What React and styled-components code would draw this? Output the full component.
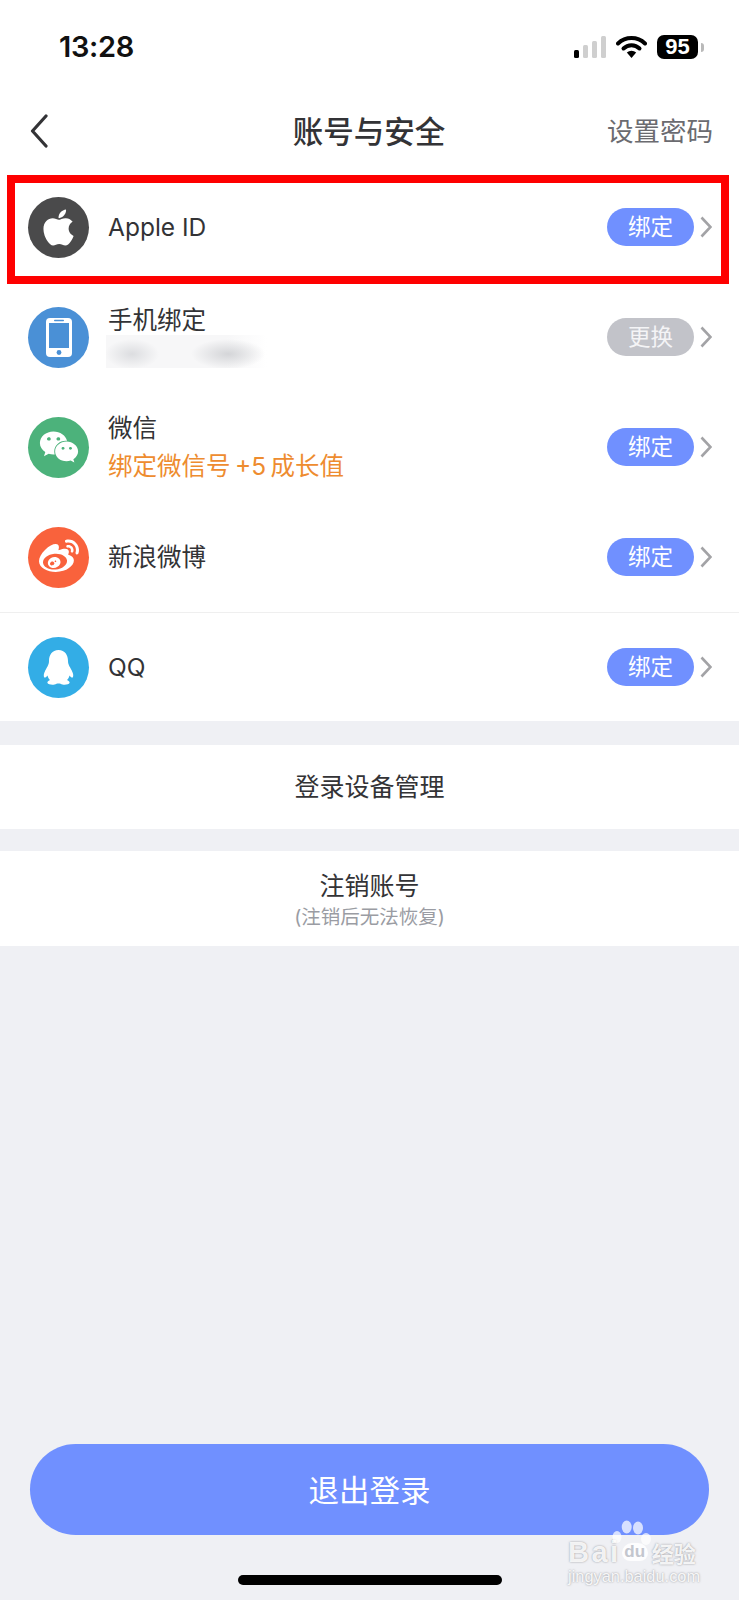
import React from "react";
import styled, { createGlobalStyle } from "styled-components";
import { FaApple, FaWeixin, FaWeibo } from "react-icons/fa";

const GlobalStyle = createGlobalStyle`
  html, body {
    margin: 0;
    padding: 0;
    background: #eff0f4;
  }
  * {
    box-sizing: border-box;
  }
  body {
    font-family: "Inter", "Noto Sans CJK SC", sans-serif;
    color: #333336;
  }
`;

const Page = styled.div`
  position: relative;
  width: 739px;
  height: 1600px;
  overflow: hidden;
  display: flex;
  flex-direction: column;
`;

const Top = styled.div`
  background: #fff;
`;

const StatusBar = styled.div`
  height: 93px;
  display: flex;
  align-items: center;
  justify-content: space-between;
  padding: 0 41px 0 59px;
`;

const Time = styled.div`
  font-size: 29px;
  font-weight: 600;
  color: #111;
  letter-spacing: -0.3px;
`;

const StatusIcons = styled.div`
  display: flex;
  align-items: center;
  gap: 10px;
`;

const Battery = styled.div`
  position: relative;
  width: 41px;
  height: 24px;
  border-radius: 7px;
  background: #000;
  color: #fff;
  font-family: "Liberation Sans", sans-serif;
  font-size: 22px;
  font-weight: 700;
  line-height: 24px;
  text-align: center;
  &::after {
    content: "";
    position: absolute;
    left: 44px;
    top: 8px;
    width: 3px;
    height: 9px;
    border-radius: 0 3px 3px 0;
    background: #b9b9b9;
  }
`;

const Nav = styled.div`
  display: grid;
  grid-template-columns: 1fr auto 1fr;
  align-items: center;
  height: 76px;
  margin-bottom: 3px;
  padding: 0 26px 0 30px;
`;

const Title = styled.div`
  margin-left: -5px;
  padding-bottom: 3px;
  font-size: 30.5px;
  font-weight: 500;
  color: #333336;
`;

const NavAction = styled.div`
  justify-self: end;
  padding-bottom: 3px;
  font-size: 26.5px;
  color: #6b6b70;
`;

const Row = styled.div`
  position: relative;
  height: 110px;
  display: flex;
  align-items: center;
  padding: 0 27px 0 28px;
  border-top: ${(p) => (p.$divider ? "1px solid #efefef" : "none")};
  &:last-child {
    height: 109px;
  }
`;

const Highlight = styled.div`
  position: absolute;
  top: 3px;
  left: 7px;
  right: 10px;
  bottom: -2px;
  border: 8px solid #fe0000;
`;

const IconCircle = styled.div`
  width: 61px;
  height: 61px;
  flex: none;
  border-radius: 50%;
  background: ${(p) => p.$color};
  color: #fff;
  display: flex;
  align-items: center;
  justify-content: center;
`;

const RowText = styled.div`
  flex: 1;
  margin-left: 19px;
`;

const RowTitle = styled.div`
  font-size: 24.5px;
  line-height: 38px;
  color: #333336;
`;

const RowHint = styled.div`
  font-size: 24.5px;
  line-height: 38px;
  color: #ee8c2f;
`;

const BlurSlot = styled.div`
  height: 38px;
`;

const BlurredNumber = styled.div`
  width: 161px;
  height: 33px;
  margin: -4px 0 0 -2px;
  background:
    radial-gradient(ellipse 27px 15px at 26px 19px, #dcdde0, transparent),
    radial-gradient(ellipse 37px 15px at 122px 19px, #d4d5d8, transparent),
    linear-gradient(90deg, #f7f7f8 75%, #fff);
`;

const Pill = styled.div`
  width: 87px;
  height: 38px;
  border-radius: 19px;
  background: ${(p) => (p.$muted ? "#c2c3c9" : "#7090ff")};
  color: ${(p) => (p.$muted ? "#f4f4f6" : "#fff")};
  font-size: 22.5px;
  line-height: 38px;
  text-align: center;
`;

const Chevron = styled.svg`
  width: 12px;
  height: 22px;
  margin-left: 6px;
  flex: none;
`;

const Section = styled.div`
  margin-top: ${(p) => p.$gap}px;
  height: ${(p) => p.$height}px;
  background: #fff;
  display: flex;
  flex-direction: column;
  align-items: center;
  justify-content: center;
`;

const SectionLabel = styled.div`
  font-size: 25px;
  line-height: 34px;
  color: #333336;
  &:not(:only-child) {
    margin-top: 3px;
  }
`;

const SectionNote = styled.div`
  font-size: 19.5px;
  line-height: 28px;
  color: #9a9ca3;
`;

const Bottom = styled.div`
  margin-top: auto;
  display: flex;
  flex-direction: column;
  align-items: center;
  padding: 0 30px 15px;
`;

const LogoutButton = styled.div`
  width: 100%;
  height: 91px;
  border-radius: 46px;
  background: #7090ff;
  color: #fff;
  font-size: 30.5px;
  line-height: 93px;
  text-align: center;
`;

const HomeBar = styled.div`
  width: 264px;
  height: 10px;
  margin-top: 40px;
  border-radius: 5px;
  background: #000;
`;

const Watermark = styled.div`
  position: absolute;
  left: 568px;
  top: 1520px;
  width: 134px;
  color: rgba(255, 255, 255, 0.9);
  text-shadow: 0 0 2px rgba(120, 120, 125, 0.8);
`;

const Paw = styled.svg`
  position: absolute;
  left: 44px;
  top: 0;
  width: 40px;
  height: 28px;
`;

const MarkLine = styled.div`
  display: flex;
  align-items: center;
  margin-top: 15px;
  font-family: "Liberation Sans", sans-serif;
  font-size: 29px;
  font-weight: 700;
  line-height: 34px;
  letter-spacing: 2.5px;
`;

const MarkPad = styled.span`
  width: 26px;
  height: 18px;
  margin-left: 1px;
  border-radius: 11px 11px 9px 9px;
  background: rgba(255, 255, 255, 0.85);
  color: #c3c6ce;
  font-size: 17px;
  line-height: 18px;
  letter-spacing: 0;
  text-align: center;
  text-shadow: none;
`;

const MarkCn = styled.span`
  margin-left: 4px;
  font-family: "Noto Sans CJK SC", sans-serif;
  font-size: 22px;
  font-weight: 700;
  letter-spacing: 0;
`;

const MarkUrl = styled.div`
  margin-top: -2px;
  font-family: "Liberation Sans", sans-serif;
  font-size: 16.4px;
  line-height: 18px;
  white-space: nowrap;
`;

const SignalIcon = () => (
  <svg width="32" height="22" viewBox="0 0 32 22">
    <rect x="0" y="14" width="5" height="8" rx="1.5" fill="#000" />
    <rect x="9" y="9" width="5" height="13" rx="1.5" fill="#cfcfcf" />
    <rect x="18" y="5" width="5" height="17" rx="1.5" fill="#cfcfcf" />
    <rect x="27" y="0" width="5" height="22" rx="1.5" fill="#cfcfcf" />
  </svg>
);

const WifiIcon = () => (
  <svg width="31" height="23" viewBox="0 0 31 23" fill="none">
    <path d="M2 8.5a19.5 19.5 0 0 1 27 0" stroke="#000" strokeWidth="4" strokeLinecap="round" />
    <path d="M7.5 13.5a11.5 11.5 0 0 1 16 0" stroke="#000" strokeWidth="4" strokeLinecap="round" />
    <path d="M10.8 17.6a7 7 0 0 1 9.4 0L15.5 23z" fill="#000" />
  </svg>
);

const BackIcon = () => (
  <svg width="18" height="34" viewBox="0 0 18 34" fill="none">
    <path d="M16 2 2.5 17 16 32" stroke="#333336" strokeWidth="3.2" strokeLinecap="round" strokeLinejoin="round" />
  </svg>
);

const PhoneIcon = () => (
  <svg width="26" height="39" viewBox="0 0 26 39">
    <rect width="26" height="39" rx="4" fill="#fff" />
    <rect x="3" y="5" width="20" height="25" fill="#4a90d6" />
    <rect x="8" y="1.8" width="10" height="1.4" rx="0.7" fill="#4a90d6" />
    <circle cx="13" cy="34.5" r="2.4" fill="#4a90d6" />
  </svg>
);

const PenguinIcon = () => (
  <svg width="31" height="35" viewBox="0 0 31 35">
    <path
      fill="#fff"
      d="M15.5 0C9 0 6 5 6 11C6 13 5.5 14.5 4.5 16.5C2.5 20 0 24 1 27C1.5 28.5 3.5 27 4.5 25.5C5 27.5 6 29 7 30C5 31 4 32 4.5 33C5 34.5 9 35 11.5 34.5C13 34 14 33.5 15.5 33.5C17 33.5 18 34 19.5 34.5C22 35 26 34.5 26.5 33C27 32 26 31 24 30C25 29 26 27.5 26.5 25.5C27.5 27 29.5 28.5 30 27C31 24 28.5 20 26.5 16.5C25.5 14.5 25 13 25 11C25 5 22 0 15.5 0Z"
    />
  </svg>
);

const accounts = [
  { name: "Apple ID", color: "#4a4a4b", icon: <FaApple size={41} />, highlight: true },
  { name: "手机绑定", color: "#4a90d6", icon: <PhoneIcon />, blurred: true, muted: true, action: "更换" },
  { name: "微信", color: "#4cb27b", icon: <FaWeixin size={40} />, hint: "绑定微信号\u2009+5\u2009成长值" },
  { name: "新浪微博", color: "#f9623c", icon: <FaWeibo size={40} /> },
  { name: "QQ", color: "#33ade6", icon: <PenguinIcon />, divider: true },
];

export default function App() {
  return (
    <Page>
      <GlobalStyle />
      <Top>
        <StatusBar>
          <Time>13:28</Time>
          <StatusIcons>
            <SignalIcon />
            <WifiIcon />
            <Battery>95</Battery>
          </StatusIcons>
        </StatusBar>
        <Nav>
          <BackIcon />
          <Title>账号与安全</Title>
          <NavAction>设置密码</NavAction>
        </Nav>
        {accounts.map((item) => (
          <Row key={item.name} $divider={item.divider}>
            <IconCircle $color={item.color}>{item.icon}</IconCircle>
            <RowText>
              <RowTitle>{item.name}</RowTitle>
              {item.hint && <RowHint>{item.hint}</RowHint>}
              {item.blurred && (
                <BlurSlot>
                  <BlurredNumber />
                </BlurSlot>
              )}
            </RowText>
            <Pill $muted={item.muted}>{item.action || "绑定"}</Pill>
            <Chevron viewBox="0 0 12 22" fill="none">
              <path d="M1.5 1.5 10.5 11 1.5 20.5" stroke="#a3a3a6" strokeWidth="2.6" />
            </Chevron>
            {item.highlight && <Highlight />}
          </Row>
        ))}
      </Top>
      <Section $gap={24} $height={84}>
        <SectionLabel>登录设备管理</SectionLabel>
      </Section>
      <Section $gap={22} $height={95}>
        <SectionLabel>注销账号</SectionLabel>
        <SectionNote>(注销后无法恢复)</SectionNote>
      </Section>
      <Bottom>
        <LogoutButton>退出登录</LogoutButton>
        <HomeBar />
      </Bottom>
      <Watermark>
        <Paw viewBox="0 0 40 28">
          <g fill="rgba(255,255,255,0.72)">
            <ellipse cx="14.7" cy="7" rx="5" ry="6.5" />
            <ellipse cx="26" cy="8" rx="5" ry="6.5" />
            <ellipse cx="5" cy="17" rx="4.5" ry="6" />
            <ellipse cx="34" cy="19" rx="5" ry="6" />
          </g>
        </Paw>
        <MarkLine>
          Bai
          <MarkPad>du</MarkPad>
          <MarkCn>经验</MarkCn>
        </MarkLine>
        <MarkUrl>jingyan.baidu.com</MarkUrl>
      </Watermark>
    </Page>
  );
}
